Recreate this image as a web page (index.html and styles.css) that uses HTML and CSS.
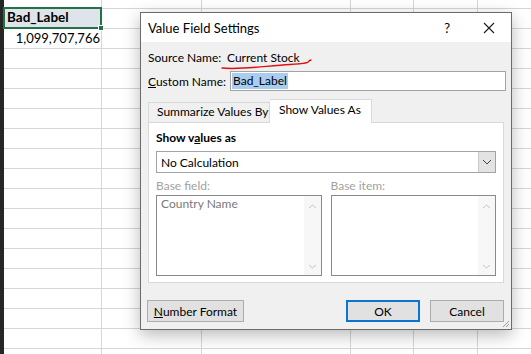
FILE: index.html
```html
<!DOCTYPE html>
<html lang="en">
<head>
    <meta charset="UTF-8">
    <title>Value Field Settings</title>
    <link rel="stylesheet" href="styles.css">
</head>
<body>
    <div class="sheet">
        <div class="strip"></div>
        <div class="col col-a">
            <div class="cell selected">Bad_Label<span class="handle"></span></div>
            <div class="cell number">1,099,707,766</div>
        </div>
        <div class="col col-b"></div>
        <div class="col col-c"></div>
        <div class="col col-d"></div>
        <div class="col col-e"></div>
        <div class="col col-f"></div>
    </div>

    <div class="dialog">
        <div class="titlebar">
            <span class="title">Value Field Settings</span>
            <span class="help">?</span>
            <svg class="close" width="12" height="12" viewBox="0 0 12 12">
                <path d="M1 1 L11 11 M11 1 L1 11" stroke="#1a1a1a" stroke-width="1.1" fill="none"/>
            </svg>
        </div>
        <div class="body">
            <div class="field-row source">
                <span class="label">Source Name:</span>
                <span class="value">Current Stock</span>
            </div>
            <div class="field-row custom">
                <span class="label"><u>C</u>ustom Name:</span>
                <div class="textbox"><span class="highlight">Bad_Label</span></div>
            </div>

            <div class="tabs">
                <div class="tab">Summarize Values By</div>
                <div class="tab active">Show Values As</div>
            </div>
            <div class="panel">
                <div class="panel-title">Show v<u>a</u>lues as</div>
                <div class="select">
                    <span>No Calculation</span>
                    <span class="arrow">
                        <svg width="10" height="6" viewBox="0 0 10 6"><path d="M1 1 L5 5 L9 1" stroke="#444" stroke-width="1" fill="none"/></svg>
                    </span>
                </div>
                <div class="lists">
                    <div class="list-group">
                        <div class="muted">Base field:</div>
                        <div class="listbox">
                            <div class="items">Country Name</div>
                            <div class="scroll">
                                <svg width="9" height="5" viewBox="0 0 9 5"><path d="M1 4 L4.5 1 L8 4" stroke="#c4c4c4" fill="none"/></svg>
                                <svg width="9" height="5" viewBox="0 0 9 5"><path d="M1 1 L4.5 4 L8 1" stroke="#c4c4c4" fill="none"/></svg>
                            </div>
                        </div>
                    </div>
                    <div class="list-group">
                        <div class="muted">Base item:</div>
                        <div class="listbox">
                            <div class="items"></div>
                            <div class="scroll">
                                <svg width="9" height="5" viewBox="0 0 9 5"><path d="M1 4 L4.5 1 L8 4" stroke="#c4c4c4" fill="none"/></svg>
                                <svg width="9" height="5" viewBox="0 0 9 5"><path d="M1 1 L4.5 4 L8 1" stroke="#c4c4c4" fill="none"/></svg>
                            </div>
                        </div>
                    </div>
                </div>
            </div>

            <div class="buttons">
                <button class="btn number-format"><u>N</u>umber Format</button>
                <div class="spacer"></div>
                <button class="btn default">OK</button>
                <button class="btn">Cancel</button>
            </div>
        </div>
        <svg class="grip" width="8" height="8" viewBox="0 0 8 8">
            <path d="M7 1 L1 7 M7 4 L4 7" stroke="#9a9a9a" fill="none"/>
        </svg>
    </div>

    <svg class="scribble" width="100" height="16" viewBox="0 0 100 16">
        <path d="M2 11 C 20 13, 45 9, 70 7.5 S 85 5, 91 3" stroke="#e01010" stroke-width="1.4" fill="none" stroke-linecap="round"/>
    </svg>
</body>
</html>
```

FILE: styles.css
```css
* {
    margin: 0;
    padding: 0;
    box-sizing: border-box;
}

body {
    width: 531px;
    height: 354px;
    overflow: hidden;
    position: relative;
    background: #fff;
    font-family: 'Lato', sans-serif;
    font-size: 12px;
    color: #000;
    white-space: nowrap;
}

/* spreadsheet behind the dialog */
.sheet {
    display: flex;
    height: 354px;
    background: repeating-linear-gradient(to bottom,
        transparent 0, transparent 8px,
        #d6d6d6 8px, #d6d6d6 9px,
        transparent 9px, transparent 20px);
}

.strip {
    width: 4px;
    background: #262626;
}

.col {
    border-right: 1px solid #d6d6d6;
}

.col-a { width: 98px; padding-top: 7px; font-size: 13px; }
.col-b { width: 100px; }
.col-c { width: 149px; }
.col-d { width: 63px; }
.col-e { width: 64px; }
.col-f { flex: 1; border-right: none; }

.cell {
    height: 20px;
    line-height: 19px;
    padding: 0 2px;
}

.selected {
    position: relative;
    height: 22px;
    margin: 0 -1px;
    border: 2px solid #217346;
    background: #dfe4ea;
    font-weight: bold;
    font-size: 13.5px;
    line-height: 17px;
    padding-left: 2px;
}

.handle {
    position: absolute;
    right: -4px;
    bottom: -4px;
    width: 6px;
    height: 6px;
    background: #217346;
    border: 1px solid #fff;
}

.number {
    text-align: right;
    padding-right: 1px;
}

/* dialog */
.dialog {
    position: absolute;
    left: 140px;
    top: 12px;
    width: 372px;
    height: 318px;
    background: #f0f0f0;
    border: 1px solid #6b6b6b;
    box-shadow: 0 5px 16px rgba(0,0,0,0.28);
}

.titlebar {
    display: flex;
    align-items: center;
    height: 29px;
    background: #fff;
    padding: 1px 0 0 7px;
}

.title {
    flex: 1;
    font-size: 13px;
}

.help {
    font-size: 13px;
    margin-right: 33px;
}

.close {
    margin-right: 16px;
}

.body {
    padding: 7px 7px 0 7px;
}

.field-row {
    display: flex;
    align-items: center;
}

.source {
    height: 16px;
}

.source .label { width: 79px; }

.custom {
    margin-top: 6px;
    height: 20px;
}

.custom .label { width: 82px; }

.textbox {
    flex: 1;
    height: 20px;
    margin-right: -2px;
    background: #fff;
    border: 1px solid #a3a3a3;
    padding: 1px;
}

.highlight {
    display: inline-block;
    background: #a9cdef;
    line-height: 16px;
    padding: 0 1px;
}

.tabs {
    display: flex;
    align-items: flex-end;
    height: 23px;
    margin-top: 8px;
    position: relative;
    z-index: 1;
}

.tab {
    height: 20px;
    line-height: 18px;
    padding: 0 8px 0 8px;
    width: 122px;
    border: 1px solid #d9d9d9;
    border-bottom: none;
    background: #f0f0f0;
}

.tab.active {
    width: 102px;
    height: 24px;
    margin-bottom: -1px;
    line-height: 20px;
    padding-left: 9px;
    background: #fff;
    border-left: none;
}

.panel {
    width: 356px;
    height: 161px;
    background: #fff;
    border: 1px solid #d9d9d9;
    padding: 6px 7px 0 7px;
}

.panel-title {
    font-weight: bold;
    height: 17px;
    line-height: 17px;
}

.select {
    display: flex;
    align-items: center;
    justify-content: space-between;
    height: 22px;
    margin-top: 5px;
    border: 1px solid #a3a3a3;
    padding-left: 4px;
}

.arrow {
    display: flex;
    align-items: center;
    justify-content: center;
    width: 17px;
    height: 20px;
    background: #e3e3e3;
    border-left: 1px solid #c8c8c8;
}

.lists {
    display: flex;
    gap: 9px;
    margin-top: 3px;
}

.list-group {
    flex: 1;
}

.muted {
    color: #a2a2a2;
    height: 19px;
    line-height: 19px;
}

.listbox {
    display: flex;
    height: 81px;
    border: 1px solid #8a8a8a;
}

.items {
    flex: 1;
    padding: 0 4px;
    line-height: 16px;
    color: #7a7a7a;
}

.scroll {
    display: flex;
    flex-direction: column;
    justify-content: space-between;
    align-items: center;
    width: 17px;
    padding: 8px 0 6px;
    background: #f7f7f7;
}

.buttons {
    display: flex;
    gap: 10px;
    margin-top: 17px;
}

.spacer {
    flex: 1;
}

.btn {
    height: 22px;
    width: 74px;
    font-family: 'Lato', sans-serif;
    font-size: 12px;
    background: #e1e1e1;
    border: 1px solid #adadad;
    color: #000;
}

.number-format {
    width: 97px;
    margin-left: -1px;
}

.btn.default {
    border: 2px solid #0a74d0;
}

.grip {
    position: absolute;
    right: 1px;
    bottom: 1px;
}

.scribble {
    position: absolute;
    left: 220px;
    top: 57px;
}
```
